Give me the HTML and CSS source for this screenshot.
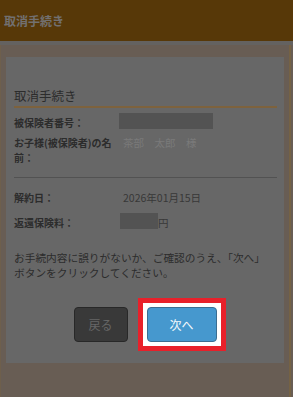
FILE: index.html
```html
<!DOCTYPE html>
<html lang="ja">
<head>
    <meta charset="UTF-8">
    <meta name="viewport" content="width=device-width, initial-scale=1.0">
    <title>取消手続き</title>
    <link rel="stylesheet" href="styles.css">
</head>
<body>
    <header class="topbar">
        <h1>取消手続き</h1>
    </header>
    <div class="page">
        <section class="card">
            <h2 class="card-title">取消手続き</h2>
            <div class="info">
                <div class="info-row">
                    <span class="label">被保険者番号：</span>
                    <span class="value"><span class="masked masked-long"></span></span>
                </div>
                <div class="info-row">
                    <span class="label">お子様(被保険者)の名前：</span>
                    <span class="value value-name">茶部　太郎　様</span>
                </div>
            </div>
            <hr class="divider">
            <div class="info info-loose">
                <div class="info-row">
                    <span class="label">解約日：</span>
                    <span class="value">2026年01月15日</span>
                </div>
                <div class="info-row">
                    <span class="label">返還保険料：</span>
                    <span class="value"><span class="masked masked-short"></span>円</span>
                </div>
            </div>
            <p class="note">お手続内容に誤りがないか、ご確認のうえ、「次へ」<br>ボタンをクリックしてください。</p>
            <div class="actions">
                <button class="btn btn-back">戻る</button>
                <span class="spotlight"><button class="btn btn-next">次へ</button></span>
            </div>
        </section>
    </div>
</body>
</html>
```

FILE: styles.css
```css
body {
    margin: 0;
    background-color: #685d54;
    font-family: "Noto Sans CJK JP", "Noto Sans", sans-serif;
    color: #2c2c2c;
}
.topbar {
    height: 41px;
    background-color: #573808;
    border-bottom: 4px solid #646260;
    display: flex;
    align-items: center;
    padding: 0 4px;
}
.topbar h1 {
    margin: 0;
    font-size: 12px;
    font-weight: bold;
    color: #727070;
}
.page {
    height: 349px;
    padding: 12px 5px 0 5px;
    border-left: 1px solid #6e5f4c;
    border-right: 2px solid #756244;
    border-bottom: 2px solid #4c391d;
    margin-right: 2px;
}
.card {
    background-color: #676767;
    padding: 30px 7px 21px 8px;
}
.card-title {
    margin: 0;
    font-size: 12.5px;
    font-weight: normal;
    line-height: 18px;
    padding-bottom: 1px;
    border-bottom: 2px solid #7d623d;
}
.info {
    display: flex;
    flex-direction: column;
    gap: 5px;
    margin-top: 7px;
}
.info-loose {
    gap: 10px;
    margin-top: 12px;
}
.info-row {
    display: grid;
    grid-template-columns: 109px 1fr;
    line-height: 15px;
}
.label {
    font-size: 10px;
    font-weight: bold;
}
.value {
    display: flex;
    align-items: flex-start;
    font-size: 10.5px;
    color: #383838;
}
.value-name {
    color: #7a7a7a;
}
.masked {
    display: inline-block;
    height: 16px;
    margin-top: -2px;
    background-color: #535353;
}
.masked-long {
    width: 94px;
    margin-left: -4px;
}
.masked-short {
    width: 38px;
    margin-left: -3px;
}
.divider {
    border: none;
    border-top: 1px solid #525252;
    margin: 12px 0 0 0;
}
.note {
    margin: 20px 0 0 0;
    font-size: 10.7px;
    line-height: 15px;
    color: #2c2c2c;
}
.actions {
    display: flex;
    justify-content: center;
    gap: 19px;
    margin-top: 27px;
    padding-right: 1px;
}
.btn {
    height: 35px;
    border-radius: 4px;
    font-family: inherit;
    font-size: 12px;
    padding: 0;
}
.btn-back {
    width: 54px;
    background-color: #393939;
    border: 1px solid #282828;
    color: #666666;
}
.spotlight {
    display: flex;
    margin: -9px;
    padding: 4px;
    background-color: #ffffff;
    border: 5px solid #e8202a;
}
.btn-next {
    width: 70px;
    background-color: #4698ce;
    border: 1px solid #3a6e92;
    color: #f4f8fb;
}
```
